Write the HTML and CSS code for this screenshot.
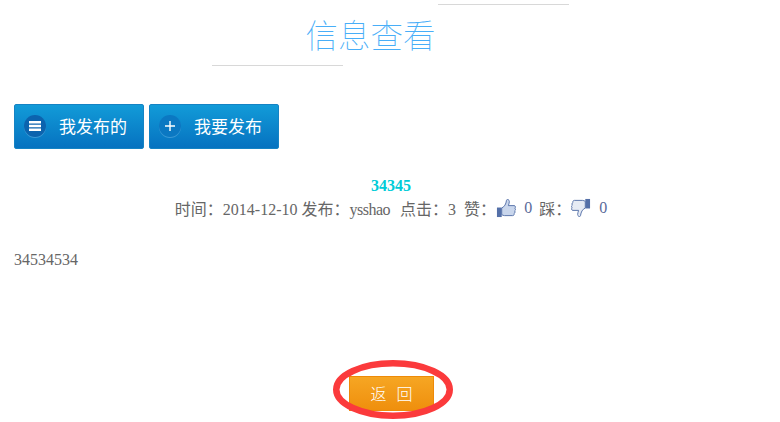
FILE: index.html
```html
<!DOCTYPE html>
<html lang="zh-CN">
<head>
    <meta charset="UTF-8">
    <title>信息查看</title>
    <link rel="stylesheet" href="styles.css">
</head>
<body>
    <div class="pageTitle">
        <div class="titleLine titleLineTop"></div>
        <h1>信息查看</h1>
        <div class="titleLine titleLineBottom"></div>
    </div>

    <div class="actions">
        <a class="actionButton" href="#">
            <span class="actionIcon actionIconDark">
                <svg width="12" height="10" viewBox="0 0 12 10"><path d="M0 0h12v2.400H0zM0 3.800h12v2.400H0zM0 7.600h12V10H0z" fill="#fff"/></svg>
            </span>
            <span>我发布的</span>
        </a>
        <a class="actionButton" href="#">
            <span class="actionIcon">
                <svg width="12" height="12" viewBox="0 0 12 12"><path d="M5.300 1h1.400v4.300H11v1.400H6.700V11H5.300V6.700H1V5.300h4.300z" fill="#fff"/></svg>
            </span>
            <span>我要发布</span>
        </a>
    </div>

    <div class="info">
        <div class="infoTitle">34345</div>
        <div class="infoMeta">
            <span>时间：2014-12-10 发布：<span class="author">ysshao</span></span>
            <span class="metaClicks">点击：3</span>
            <span class="metaUp">赞：</span>
            <svg class="thumb" width="20" height="20" viewBox="0 0 21 21">
                <path d="M1 10h5v10H1z" fill="#5470a8"/>
                <path d="M6 10.500c3-1.500 4.500-4 5-8 .2-1.500 3-1.200 3 1.200 0 1.600-.6 3-1 4.300h6c1.600 0 1.800 2 .8 2.700 1 .8.8 2.300-.2 2.800.7 1 .4 2.200-.6 2.700.4 1-.2 2.300-1.600 2.300H9c-1.300 0-2-.6-3-1z" fill="#c9d6ec" stroke="#5470a8"/>
            </svg>
            <span class="count">0</span>
            <span class="metaDown">踩：</span>
            <svg class="thumb" width="20" height="20" viewBox="0 0 21 21">
                <path d="M15 1h5v10h-5z" fill="#5470a8"/>
                <path d="M15 10.500c-3 1.500-4.500 4-5 8-.2 1.500-3 1.200-3-1.200 0-1.600.6-3 1-4.300H2c-1.600 0-1.800-2-.8-2.700-1-.8-.8-2.300.2-2.800-.7-1-.4-2.200.6-2.700C1.600 3.800 2.200 2.500 3.600 2.500H12c1.300 0 2 .6 3 1z" fill="#e6ebf4" stroke="#5470a8"/>
            </svg>
            <span class="count">0</span>
        </div>
    </div>

    <p class="content">34534534</p>

    <div class="backRow">
        <div class="backWrap">
            <a class="backButton" href="#">返<span class="backGap"></span>回</a>
            <svg class="mark" width="122" height="62" viewBox="0 0 122 62">
                <ellipse cx="61" cy="30.500" rx="56.750" ry="26.250" fill="none" stroke="#fb3a3c" stroke-width="6.500"/>
            </svg>
        </div>
    </div>
</body>
</html>
```

FILE: styles.css
```css
html, body {
    height: 422px;
}

body {
    margin: 0;
    background-color: white;
    color: #666;
    font-family: "Liberation Serif", "Noto Sans CJK SC", serif;
    font-size: 16px;
}

a {
    text-decoration: none;
}

.pageTitle {
    padding-top: 4px;
}

.titleLine {
    width: 131px;
    height: 1px;
    background-color: #d8d8d8;
}

.titleLineTop {
    margin-left: 438px;
}

.titleLineBottom {
    margin-left: 212px;
}

h1 {
    margin: 0;
    height: 60px;
    width: 741px;
    line-height: 57px;
    text-align: center;
    font-family: "Noto Sans CJK SC", sans-serif;
    font-size: 32.5px;
    font-weight: 100;
    color: #48aef8;
}

.actions {
    display: flex;
    gap: 5px;
    margin: 38px 0 0 14px;
}

.actionButton {
    display: flex;
    align-items: center;
    gap: 13px;
    box-sizing: border-box;
    width: 130px;
    height: 45px;
    padding: 0 0 2px 9px;
    border: 1px solid #1583c4;
    border-radius: 2px;
    background: linear-gradient(#129bd8, #0672c0);
    color: white;
    font-family: "Noto Sans CJK SC", sans-serif;
    font-size: 17px;
}

.actionIcon {
    display: flex;
    align-items: center;
    justify-content: center;
    width: 22px;
    height: 22px;
    border-radius: 50%;
    background-color: #0b78c2;
    box-shadow: 0 1px 0 #3c9ad6;
}

.actionIconDark {
    background-color: #0c63ae;
}

.info {
    box-sizing: border-box;
    width: 780px;
    padding-left: 2px;
    margin-top: 27px;
    text-align: center;
}

.infoTitle {
    height: 20px;
    line-height: 20px;
    font-weight: bold;
    color: #00ccd8;
}

.infoMeta {
    display: flex;
    justify-content: center;
    align-items: center;
    height: 24px;
}

.author {
    letter-spacing: -0.5px;
}

.metaClicks {
    margin-left: 10px;
}

.metaUp {
    margin-left: 8px;
}

.metaDown {
    margin-left: 7px;
}

.count {
    margin-left: 8px;
    color: #5a6a9a;
}

.content {
    margin: 30px 0 0 14px;
    line-height: 20px;
}

.backRow {
    display: flex;
    justify-content: center;
    box-sizing: border-box;
    width: 780px;
    padding-left: 3px;
    margin-top: 106px;
}

.backWrap {
    position: relative;
}

.backButton {
    display: block;
    box-sizing: border-box;
    width: 85px;
    height: 35px;
    line-height: 32px;
    border: 1px solid #ee8a08;
    background: linear-gradient(#f6a623, #ef8f0d);
    color: white;
    text-align: center;
    font-family: "Noto Sans CJK SC", sans-serif;
    font-size: 16px;
    font-weight: 300;
}

.backGap {
    display: inline-block;
    width: 10px;
}

.mark {
    position: absolute;
    left: -17px;
    top: -17px;
}
```
